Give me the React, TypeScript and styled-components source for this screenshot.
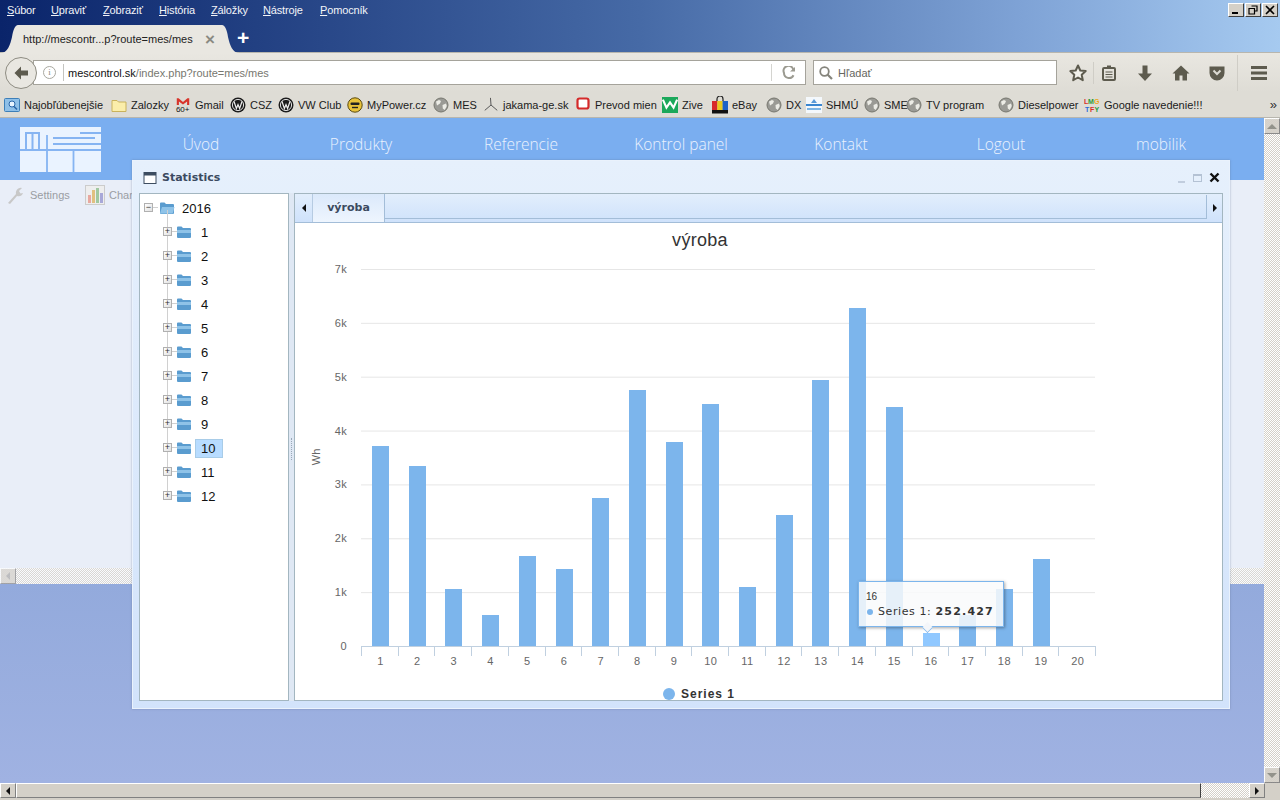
import React from 'react';
import styled, { createGlobalStyle } from 'styled-components';

const menuItems = [
  { first: 'S', rest: 'úbor', width: 44 },
  { first: 'U', rest: 'praviť', width: 52 },
  { first: 'Z', rest: 'obraziť', width: 56 },
  { first: 'H', rest: 'istória', width: 52 },
  { first: 'Z', rest: 'áložky', width: 52 },
  { first: 'N', rest: 'ástroje', width: 57 },
  { first: 'P', rest: 'omocník', width: 60 },
];

const bookmarks = [
  { label: 'Najobľúbenejšie', icon: 'star', width: 107 },
  { label: 'Zalozky', icon: 'folder', width: 64 },
  { label: 'Gmail', icon: 'gmail', width: 55 },
  { label: 'CSZ', icon: 'vw', width: 48 },
  { label: 'VW Club', icon: 'vw', width: 69 },
  { label: 'MyPower.cz', icon: 'smile', width: 86 },
  { label: 'MES', icon: 'globe', width: 50 },
  { label: 'jakama-ge.sk', icon: 'turbine', width: 92 },
  { label: 'Prevod mien', icon: 'prevod', width: 87 },
  { label: 'Zive', icon: 'zive', width: 50 },
  { label: 'eBay', icon: 'bag', width: 54 },
  { label: 'DX', icon: 'globe', width: 40 },
  { label: 'SHMÚ', icon: 'shmu', width: 58 },
  { label: 'SME', icon: 'globe', width: 42 },
  { label: 'TV program', icon: 'globe', width: 92 },
  { label: 'Dieselpower', icon: 'globe', width: 86 },
  { label: 'Google navedenie!!!', icon: 'lmgtfy', width: 180 },
];

const navItems = ['Úvod', 'Produkty', 'Referencie', 'Kontrol panel', 'Kontakt', 'Logout', 'mobilik'];
const months = ['1', '2', '3', '4', '5', '6', '7', '8', '9', '10', '11', '12'];

const barTops = [446, 466, 589, 615, 556, 569, 498, 390, 442, 404, 587, 515, 380, 308, 407, 633, 615, 589, 559];
const yTicks = ['0', '1k', '2k', '3k', '4k', '5k', '6k', '7k'];

const BASE_Y = 646;
const STEP_Y = 53.86;
const LEFT_X = 361;
const STEP_X = 36.7;

function BookmarkIcon({ kind }: { kind: string }) {
  switch (kind) {
    case 'star':
      return (
        <svg width="16" height="16" viewBox="0 0 16 16">
          <rect x="0.5" y="1.5" width="15" height="13" rx="1" fill="#8fc0e8" stroke="#3d7fb8" />
          <circle cx="8" cy="7" r="3" fill="#e8f4ff" stroke="#2a66a8" />
          <path d="M10 9.5l3 3" stroke="#2a66a8" strokeWidth="1.6" />
        </svg>
      );
    case 'folder':
      return (
        <svg width="16" height="16" viewBox="0 0 16 16">
          <path d="M1 3.5h5l1.5 1.5H15v9.5H1z" fill="#fbeeaa" stroke="#c9b25c" />
        </svg>
      );
    case 'gmail':
      return (
        <svg width="18" height="18" viewBox="0 0 18 18">
          <path d="M2 9V1.5h2L9 5.5l5-4h2V9h-2.4V5L9 8.5 4.4 5v4z" fill="#d8342a" />
          <text x="1" y="17" fontSize="9" fontFamily="Liberation Sans" fill="#111">60+</text>
        </svg>
      );
    case 'vw':
      return (
        <svg width="16" height="16" viewBox="0 0 16 16">
          <circle cx="8" cy="8" r="7.5" fill="#1c1c1c" />
          <circle cx="8" cy="8" r="5.6" fill="none" stroke="#ddd" />
          <path d="M4 4.5l2.4 7L8 7.5l1.6 4 2.4-7" fill="none" stroke="#eee" strokeWidth="1.2" />
        </svg>
      );
    case 'smile':
      return (
        <svg width="16" height="16" viewBox="0 0 16 16">
          <circle cx="8" cy="8" r="7.2" fill="#e8c23a" stroke="#5a4a10" />
          <rect x="3.5" y="5.5" width="9" height="2.5" rx="1" fill="#222" />
          <path d="M5 10.5h6" stroke="#222" strokeWidth="1.4" />
        </svg>
      );
    case 'globe':
      return (
        <svg width="16" height="16" viewBox="0 0 16 16">
          <circle cx="8" cy="8" r="7" fill="#9a9a95" stroke="#77776f" />
          <path d="M3 4.5l3-1.5 2 1-1 2.5-3 2zM9.5 8l3.5-1.5.8 2.5-2 4-2-1.5z" fill="#ecece6" />
        </svg>
      );
    case 'turbine':
      return (
        <svg width="18" height="18" viewBox="0 0 18 18">
          <path d="M9 9L8.4 1M9 9l7 6M9 9l-7 6" fill="none" stroke="#555" strokeWidth="1.1" />
        </svg>
      );
    case 'prevod':
      return (
        <svg width="16" height="16" viewBox="0 0 16 16">
          <rect x="2.5" y="1.5" width="11" height="10" rx="2" fill="#fff" stroke="#d42a2a" strokeWidth="2.2" />
        </svg>
      );
    case 'zive':
      return (
        <svg width="18" height="18" viewBox="0 0 18 18">
          <rect width="18" height="18" fill="#1ba85a" />
          <path d="M1 3l4 9 4-6 4 6 4-9" fill="none" stroke="#fff" strokeWidth="2.4" />
        </svg>
      );
    case 'bag':
      return (
        <svg width="16" height="18" viewBox="0 0 16 18">
          <path d="M5 5V3a3 3 0 016 0v2" fill="none" stroke="#222" strokeWidth="1.2" />
          <rect y="5" width="5.5" height="9" fill="#d8282a" />
          <rect x="5.3" y="5" width="5.5" height="9" fill="#e9c81f" />
          <rect x="10.6" y="5" width="5.4" height="9" fill="#1c62c8" />
          <rect y="14" width="16" height="3.5" fill="#111" />
        </svg>
      );
    case 'shmu':
      return (
        <svg width="16" height="16" viewBox="0 0 16 16">
          <rect width="16" height="16" fill="#f4f8fc" />
          <path d="M5 6l3-4 3 4z" fill="#5a9ad8" />
          <rect y="7" width="16" height="2" fill="#3a86d0" />
          <rect x="1" y="11" width="14" height="2" fill="#7cb4e4" />
        </svg>
      );
    default:
      return (
        <svg width="16" height="16" viewBox="0 0 16 16" fontFamily="Liberation Sans" fontSize="7" fontWeight="700">
          <text x="0" y="7" fill="#d8302a">L</text>
          <text x="4" y="7" fill="#2a9a3a">M</text>
          <text x="10" y="7" fill="#e8a81a">G</text>
          <text x="1" y="15" fill="#2a6ad8">T</text>
          <text x="6" y="15" fill="#d8302a">F</text>
          <text x="10.5" y="15" fill="#2a9a3a">Y</text>
        </svg>
      );
  }
}

function ToolIcon({ kind }: { kind: string }) {
  const color = '#5d5b4e';
  if (kind === 'star')
    return (
      <svg width="20" height="20" viewBox="0 0 20 20">
        <path d="M10 2.5l2.3 5 5.4.6-4 3.7 1.1 5.4L10 14.5l-4.8 2.7 1.1-5.4-4-3.7 5.4-.6z" fill="#f1f0ea" stroke={color} strokeWidth="2" strokeLinejoin="round" />
      </svg>
    );
  if (kind === 'list')
    return (
      <svg width="20" height="20" viewBox="0 0 20 20">
        <rect x="4" y="5" width="12" height="12" rx="1" fill="none" stroke={color} strokeWidth="2" />
        <rect x="8" y="2.5" width="4" height="3" fill={color} />
        <path d="M6.5 9h7M6.5 11.5h7M6.5 14h7" stroke={color} />
      </svg>
    );
  if (kind === 'down')
    return (
      <svg width="20" height="20" viewBox="0 0 20 20">
        <path d="M7.5 2.5h5v8H17l-7 7.5-7-7.5h4.5z" fill={color} />
      </svg>
    );
  if (kind === 'home')
    return (
      <svg width="20" height="20" viewBox="0 0 20 20">
        <path d="M10 2.5L1.5 10.5H4v7h4.5v-5h3v5H16v-7h2.5z" fill={color} />
      </svg>
    );
  if (kind === 'pocket')
    return (
      <svg width="20" height="20" viewBox="0 0 20 20">
        <path d="M2.5 3.5h15v6.5a7.5 7.5 0 01-15 0z" fill={color} />
        <path d="M6.5 7.5L10 11l3.5-3.5" fill="none" stroke="#dbd9d2" strokeWidth="2" />
      </svg>
    );
  return (
    <svg width="20" height="20" viewBox="0 0 20 20">
      <path d="M2 4.5h16M2 10h16M2 15.5h16" stroke={color} strokeWidth="3" />
    </svg>
  );
}

function FolderIcon({ open }: { open?: boolean }) {
  return (
    <svg width="16" height="14" viewBox="0 0 16 14">
      <path d="M1 2.5a1 1 0 011-1h3.5L7 3h7a1 1 0 011 1v8a1 1 0 01-1 1H2a1 1 0 01-1-1z" fill="#5a9ccf" />
      {open ? (
        <path d="M3 6h12.5l-1.8 6.5H1z" fill="#8fc3e8" />
      ) : (
        <path d="M1 5h14v3H1z" fill="#8fc3e8" />
      )}
    </svg>
  );
}

function MesLogo() {
  return (
    <svg width="81" height="45" viewBox="0 0 81 45">
      <rect width="81" height="45" fill="#eaf3ff" />
      <path d="M0 23h81M27 8v37M53.5 23v22" stroke="#86b4f2" strokeWidth="1.8" />
      <path d="M6 23V6h13v17M12.5 6v17" fill="none" stroke="#86b4f2" strokeWidth="2" />
      <path d="M33 11h42M33 17h48M60 6h21" stroke="#86b4f2" strokeWidth="1.8" />
    </svg>
  );
}

function Chart() {
  return (
    <ChartSvg viewBox="295 223 927 477">
      <text x="700" y="246" textAnchor="middle" fontSize="18" letterSpacing="0.3" fill="#333">výroba</text>
      {yTicks.map((tick, i) => {
        const y = BASE_Y - i * STEP_Y;
        return (
          <g key={tick}>
            {i > 0 && <line x1={LEFT_X} x2={1095} y1={y + 0.5} y2={y + 0.5} stroke="#e6e6e6" />}
            <text x="347" y={y + 4} textAnchor="end" fontSize="11" letterSpacing="0.3" fill="#666">{tick}</text>
          </g>
        );
      })}
      <text transform="translate(320 457) rotate(-90)" textAnchor="middle" fontSize="11" fill="#666">Wh</text>
      {barTops.map((top, i) => (
        <rect
          key={i}
          x={Math.round(LEFT_X + i * STEP_X + 11)}
          y={top}
          width="17"
          height={BASE_Y - top}
          fill={i === 15 ? '#90c8ff' : '#7cb5ec'}
        />
      ))}
      <line x1={LEFT_X} x2={1096} y1="646.5" y2="646.5" stroke="#c0d0e0" />
      {Array.from({ length: 21 }, (_, i) => (
        <line
          key={i}
          x1={Math.round(LEFT_X + i * STEP_X) + 0.5}
          x2={Math.round(LEFT_X + i * STEP_X) + 0.5}
          y1="646"
          y2="656"
          stroke="#c0d0e0"
        />
      ))}
      {Array.from({ length: 20 }, (_, i) => (
        <text key={i} x={LEFT_X + i * STEP_X + 19.5} y="665" textAnchor="middle" fontSize="11" letterSpacing="0.5" fill="#666">
          {i + 1}
        </text>
      ))}
      <circle cx="669" cy="694" r="6" fill="#7cb5ec" />
      <text x="681" y="698" fontSize="12" fontWeight="700" letterSpacing="1" fill="#333">Series 1</text>
    </ChartSvg>
  );
}

export default function App() {
  return (
    <Browser>
      <GlobalStyle />
      <TitleBar>
        <MenuRow>
          {menuItems.map((item, i) => (
            <MenuItem key={i} $width={item.width}>
              <u>{item.first}</u>
              {item.rest}
            </MenuItem>
          ))}
          <WinButtons>
            <WinButton><span className="min" /></WinButton>
            <WinButton>
              <svg width="10" height="10" viewBox="0 0 10 10">
                <path d="M3.5 1H9v5H7M1 3.5h5.500V9H1z" fill="none" stroke="#000" strokeWidth="1.2" />
              </svg>
            </WinButton>
            <WinButton>
              <svg width="10" height="10" viewBox="0 0 10 10">
                <path d="M1 1l8 8M9 1l-8 8" stroke="#000" strokeWidth="1.6" />
              </svg>
            </WinButton>
          </WinButtons>
        </MenuRow>
        <TabRow>
          <BrowserTab>
            <span>http://mescontr...p?route=mes/mes</span>
            <TabClose>×</TabClose>
          </BrowserTab>
          <NewTab>+</NewTab>
        </TabRow>
      </TitleBar>

      <Toolbar>
        <BackButton>
          <svg width="18" height="18" viewBox="0 0 18 18">
            <path d="M9 2.5L2.5 9 9 15.5v-4h7v-5H9z" fill="#5d5b4e" />
          </svg>
        </BackButton>
        <UrlBar>
          <InfoIcon>i</InfoIcon>
          <UrlDivider />
          <UrlText>
            mescontrol.sk<span>/index.php?route=mes/mes</span>
          </UrlText>
          <ReloadCell>
            <svg width="14" height="14" viewBox="0 0 14 14">
              <path d="M11.5 5A5 5 0 102 7a5 5 0 009.5 2.2" fill="none" stroke="#9b9a90" strokeWidth="2" />
              <path d="M8 5.5h5V1z" fill="#9b9a90" />
            </svg>
          </ReloadCell>
        </UrlBar>
        <SearchBar>
          <svg width="16" height="16" viewBox="0 0 16 16">
            <circle cx="6.5" cy="6.5" r="4.3" fill="none" stroke="#85847c" strokeWidth="1.8" />
            <path d="M9.5 9.5L14 14" stroke="#85847c" strokeWidth="2.2" />
          </svg>
          <span>Hľadať</span>
        </SearchBar>
        <ToolButton $margin={11}><ToolIcon kind="star" /></ToolButton>
        <ToolSeparator />
        <ToolButton $margin={0}><ToolIcon kind="list" /></ToolButton>
        <ToolButton $margin={16}><ToolIcon kind="down" /></ToolButton>
        <ToolButton $margin={16}><ToolIcon kind="home" /></ToolButton>
        <ToolButton $margin={16}><ToolIcon kind="pocket" /></ToolButton>
        <MenuSeparator />
        <ToolButton $margin={11}><ToolIcon kind="menu" /></ToolButton>
      </Toolbar>

      <BookmarkBar>
        {bookmarks.map((item) => (
          <Bookmark key={item.label} $width={item.width}>
            <BookmarkGlyph><BookmarkIcon kind={item.icon} /></BookmarkGlyph>
            <span>{item.label}</span>
          </Bookmark>
        ))}
        <Overflow>»</Overflow>
      </BookmarkBar>

      <ViewportRow>
        <Page>
          <PageHeader>
            <LogoCell><MesLogo /></LogoCell>
            {navItems.map((item) => (
              <NavLink key={item}>{item}</NavLink>
            ))}
          </PageHeader>
          <SubNav>
            <SubNavItem $width={79}>
              <svg width="20" height="20" viewBox="0 0 20 20">
                <path d="M2 18l8-9a5 5 0 016-6l-3 3 1.5 2.5L17 8a5 5 0 01-6 3l-7 8z" fill="#c8c8c8" />
              </svg>
              Settings
            </SubNavItem>
            <SubNavItem $width={80}>
              <svg width="20" height="20" viewBox="0 0 20 20">
                <rect x="0.5" y="0.5" width="19" height="19" fill="#eee" stroke="#ccc" />
                <rect x="3" y="10" width="3" height="8" fill="#e8a8a0" />
                <rect x="7" y="5" width="3" height="13" fill="#e0c080" />
                <rect x="11" y="3" width="3" height="15" fill="#a0c8a0" />
                <rect x="15" y="8" width="3" height="10" fill="#a8a8d8" />
              </svg>
              Charts
            </SubNavItem>
          </SubNav>
          <PageFill />
          <InnerScrollbar>
            <ScrollButton $faded>
              <Arrow $dir="left" $color="#a8a8a8" />
            </ScrollButton>
          </InnerScrollbar>
          <PageBottom />

          <Window>
            <WindowHeader>
              <svg width="14" height="14" viewBox="0 0 14 14">
                <rect x="1" y="1.5" width="12" height="11" fill="#fff" stroke="#3d4d60" />
                <rect x="1" y="1.5" width="12" height="3" fill="#3d4d60" />
              </svg>
              <WindowTitle>Statistics</WindowTitle>
              <WindowTools>
                <svg width="10" height="10" viewBox="0 0 10 10"><path d="M1 9h7" stroke="#b4c2d4" strokeWidth="1.5" /></svg>
                <svg width="10" height="10" viewBox="0 0 10 10"><rect x="0.5" y="1.5" width="8" height="7" fill="none" stroke="#b4c2d4" /><path d="M0 2h9" stroke="#b4c2d4" strokeWidth="2" /></svg>
                <svg width="11" height="11" viewBox="0 0 11 11"><path d="M1.5 1.5l8 8M9.5 1.5l-8 8" stroke="#111" strokeWidth="2.4" /></svg>
              </WindowTools>
            </WindowHeader>
            <WindowBody>
              <TreePanel>
                <TreeRow>
                  <Expander $offset={4}>−</Expander>
                  <FolderIcon open />
                  <RootLabel>2016</RootLabel>
                </TreeRow>
                <TreeBranch>
                  {months.map((month) => (
                    <TreeRow key={month} $child>
                      <Expander>+</Expander>
                      <FolderIcon />
                      <NodeLabel $selected={month === '10'}>{month}</NodeLabel>
                    </TreeRow>
                  ))}
                </TreeBranch>
              </TreePanel>
              <Splitter />
              <TabPanel>
                <TabStrip>
                  <Scroller $width={17}><Arrow $dir="left" $color="#111" /></Scroller>
                  <ActiveTab>výroba</ActiveTab>
                  <TabStripFill />
                  <Scroller $width={15}><Arrow $dir="right" $color="#111" /></Scroller>
                </TabStrip>
                <ChartArea>
                  <Chart />
                  <Tooltip>
                    <TooltipHead>16</TooltipHead>
                    <TooltipLine>
                      <TooltipDot />
                      Series 1:<b>252.427</b>
                    </TooltipLine>
                  </Tooltip>
                </ChartArea>
              </TabPanel>
            </WindowBody>
          </Window>
        </Page>
        <VerticalScrollbar>
          <ScrollButton $faded><Arrow $dir="up" $color="#8a8a82" /></ScrollButton>
          <ScrollButton $faded><Arrow $dir="down" $color="#8a8a82" /></ScrollButton>
        </VerticalScrollbar>
      </ViewportRow>

      <BottomScrollbar>
        <BottomButton><Arrow $dir="left" $color="#111" /></BottomButton>
        <BottomThumb />
        <BottomTrack />
        <BottomButton><Arrow $dir="right" $color="#111" /></BottomButton>
      </BottomScrollbar>
    </Browser>
  );
}

const GlobalStyle = createGlobalStyle`
  html, body {
    margin: 0;
    padding: 0;
    overflow: hidden;
  }
  body {
    font-family: "Liberation Sans", Arial, sans-serif;
  }
`;

const checker = `repeating-conic-gradient(#d4d0c8 0 25%, #ffffff 0 50%) 0 0 / 2px 2px`;

const Browser = styled.div`
  width: 1280px;
  height: 800px;
  display: flex;
  flex-direction: column;
  overflow: hidden;
  background: #d4d0c8;
`;

const TitleBar = styled.div`
  height: 53px;
  flex: none;
  box-sizing: border-box;
  border-bottom: 1px solid #b8b6ae;
  background: linear-gradient(90deg, #0a246a 0%, #466aa6 50%, #7fa3d6 80%, #a6caf0 100%);
  display: flex;
  flex-direction: column;
`;

const MenuRow = styled.div`
  height: 20px;
  padding-left: 7px;
  display: flex;
  align-items: center;
`;

const MenuItem = styled.div<{ $width: number }>`
  width: ${(p) => p.$width}px;
  flex: none;
  color: #f2f4f8;
  font-size: 11px;
  letter-spacing: -0.15px;
`;

const WinButtons = styled.div`
  margin-left: auto;
  margin-right: 2px;
  display: flex;
`;

const WinButton = styled.div`
  width: 16px;
  height: 14px;
  margin-left: 1px;
  background: #d4d0c8;
  border: 1px solid;
  border-color: #fff #404040 #404040 #fff;
  box-sizing: border-box;
  display: flex;
  align-items: center;
  justify-content: center;

  .min {
    width: 6px;
    height: 2px;
    background: #000;
    margin-top: 6px;
    margin-right: 2px;
  }
`;

const TabRow = styled.div`
  flex: 1;
  display: flex;
  align-items: flex-end;
  padding-left: 18px;
`;

const BrowserTab = styled.div`
  position: relative;
  width: 204px;
  height: 28px;
  margin-bottom: -1px;
  padding-left: 5px;
  box-sizing: border-box;
  background: #e9e7e1;
  display: flex;
  align-items: center;
  justify-content: space-between;
  font-size: 11px;
  color: #222;
  white-space: nowrap;

  &::before,
  &::after {
    content: '';
    position: absolute;
    bottom: 0;
    width: 18px;
    height: 28px;
    background: #e9e7e1;
  }
  &::before {
    left: -18px;
    clip-path: path('M0 28 C8 28 10 20 12 12 C13 5 15 0 18 0 L18 28 Z');
  }
  &::after {
    right: -18px;
    clip-path: path('M18 28 C10 28 8 20 6 12 C5 5 3 0 0 0 L0 28 Z');
  }
`;

const TabClose = styled.span`
  margin-right: 7px;
  color: #8a8a82;
  font-size: 17px;
  font-weight: 700;
  line-height: 1;
`;

const NewTab = styled.div`
  position: relative;
  margin-left: 15px;
  margin-bottom: 3px;
  color: #fff;
  font-size: 21px;
  font-weight: 700;
  line-height: 22px;
`;

const Toolbar = styled.div`
  height: 39px;
  flex: none;
  background: linear-gradient(180deg, #e9e7e1 0%, #dedcd5 100%);
  box-sizing: border-box;
  display: flex;
  align-items: center;
  padding-left: 5px;
`;

const BackButton = styled.div`
  position: relative;
  z-index: 1;
  width: 32px;
  height: 32px;
  box-sizing: border-box;
  border: 1px solid #8e8c82;
  border-radius: 50%;
  background: #e9e7e1;
  display: flex;
  align-items: center;
  justify-content: center;
  flex: none;
`;

const UrlBar = styled.div`
  margin-left: -4px;
  width: 773px;
  height: 25px;
  flex: none;
  box-sizing: border-box;
  background: #fff;
  border: 1px solid #a5a39b;
  display: flex;
  align-items: center;
  padding-left: 9px;
`;

const InfoIcon = styled.div`
  width: 11px;
  height: 11px;
  border: 1px solid #a8a8a0;
  border-radius: 50%;
  color: #8a8a82;
  font-size: 9px;
  line-height: 11px;
  text-align: center;
  font-family: "Liberation Serif", serif;
`;

const UrlDivider = styled.div`
  width: 1px;
  height: 17px;
  margin: 0 4px 0 7px;
  background: #c4c4c0;
`;

const UrlText = styled.div`
  flex: 1;
  font-size: 11px;
  color: #111;

  span {
    color: #77776f;
  }
`;

const ReloadCell = styled.div`
  width: 33px;
  height: 17px;
  border-left: 1px solid #d4d4d0;
  display: flex;
  align-items: center;
  justify-content: center;
`;

const SearchBar = styled.div`
  margin-left: 7px;
  width: 244px;
  height: 25px;
  flex: none;
  box-sizing: border-box;
  background: #fff;
  border: 1px solid #a5a39b;
  display: flex;
  align-items: center;
  gap: 4px;
  padding-left: 4px;
  font-size: 11px;
  color: #66665e;
`;

const ToolButton = styled.div<{ $margin: number }>`
  margin-left: ${(p) => p.$margin}px;
  width: 20px;
  height: 20px;
  flex: none;
`;

const ToolSeparator = styled.div`
  width: 1px;
  height: 22px;
  margin: 0 5px;
  background: #cfcdc6;
`;

const MenuSeparator = styled.div`
  width: 1px;
  height: 36px;
  margin-left: 10px;
  background: #cfcdc6;
`;

const BookmarkBar = styled.div`
  height: 26px;
  flex: none;
  background: #dedcd5;
  border-bottom: 1px solid #b8b6ae;
  box-sizing: border-box;
  display: flex;
  align-items: center;
  padding-left: 4px;
`;

const Bookmark = styled.div<{ $width: number }>`
  width: ${(p) => p.$width}px;
  flex: none;
  display: flex;
  align-items: center;
  gap: 4px;
  font-size: 11px;
  color: #1b1b1b;
  white-space: nowrap;
`;

const BookmarkGlyph = styled.div`
  width: 16px;
  height: 18px;
  display: flex;
  align-items: center;
  justify-content: center;
`;

const Overflow = styled.div`
  margin-left: auto;
  margin-right: 3px;
  font-size: 13px;
  color: #333;
`;

const ViewportRow = styled.div`
  height: 665px;
  flex: none;
  display: flex;
`;

const Page = styled.div`
  position: relative;
  width: 1264px;
  flex: none;
  display: flex;
  flex-direction: column;
  background: #e9eef8;
`;

const PageHeader = styled.div`
  height: 62px;
  flex: none;
  background: #7aaef0;
  display: flex;
`;

const LogoCell = styled.div`
  width: 121px;
  flex: none;
  padding: 9px 0 0 20px;
  box-sizing: border-box;
`;

const NavLink = styled.div`
  width: 160px;
  flex: none;
  text-align: center;
  padding-top: 15px;
  color: #eaf2fe;
  font-family: "Open Sans", sans-serif;
  font-weight: 300;
  font-size: 15.5px;
`;

const SubNav = styled.div`
  height: 30px;
  flex: none;
  display: flex;
  align-items: center;
  padding-left: 6px;
`;

const SubNavItem = styled.div<{ $width: number }>`
  width: ${(p) => p.$width}px;
  flex: none;
  display: flex;
  align-items: center;
  gap: 4px;
  font-size: 11px;
  color: #9a9da3;
`;

const PageFill = styled.div`
  flex: 1;
`;

const InnerScrollbar = styled.div`
  height: 16px;
  flex: none;
  background: ${checker};
  opacity: 0.75;
`;

const ScrollButton = styled.div<{ $faded?: boolean }>`
  width: 16px;
  height: 16px;
  flex: none;
  box-sizing: border-box;
  background: #d4d0c8;
  border: 1px solid;
  border-color: #fff #808080 #808080 #fff;
  opacity: ${(p) => (p.$faded ? 0.9 : 1)};
  display: flex;
  align-items: center;
  justify-content: center;
`;

const BottomButton = styled(ScrollButton)`
  height: 15px;
`;

const Arrow = styled.span<{ $dir: 'left' | 'right' | 'up' | 'down'; $color: string }>`
  width: 0;
  height: 0;
  border-style: solid;
  border-color: transparent;
  ${(p) => (p.$dir === 'left' ? `border-width: 4px 4px 4px 0; border-right-color: ${p.$color};` : '')}
  ${(p) => (p.$dir === 'right' ? `border-width: 4px 0 4px 4px; border-left-color: ${p.$color};` : '')}
  ${(p) => (p.$dir === 'up' ? `border-width: 0 5px 5px 5px; border-bottom-color: ${p.$color};` : '')}
  ${(p) => (p.$dir === 'down' ? `border-width: 5px 5px 0 5px; border-top-color: ${p.$color};` : '')}
`;

const PageBottom = styled.div`
  height: 199px;
  flex: none;
  background: linear-gradient(180deg, #93aadc 0%, #a0b2e2 100%);
`;

const VerticalScrollbar = styled.div`
  width: 16px;
  flex: none;
  background: ${checker};
  display: flex;
  flex-direction: column;
  justify-content: space-between;
`;

const BottomScrollbar = styled.div`
  height: 17px;
  flex: none;
  display: flex;
  background: #d4d0c8;
`;

const BottomThumb = styled.div`
  width: 1185px;
  flex: none;
  height: 15px;
  box-sizing: border-box;
  background: #d4d0c8;
  border-top: 1px solid #fff;
  border-left: 1px solid #fff;
  border-right: 1px solid #404040;
  border-bottom: 1px solid #808080;
`;

const BottomTrack = styled.div`
  width: 48px;
  height: 15px;
  flex: none;
  background: ${checker};
`;

const Window = styled.div`
  position: absolute;
  left: 132px;
  top: 42px;
  width: 1098px;
  height: 549px;
  box-sizing: border-box;
  display: flex;
  flex-direction: column;
  padding: 0 6px 7px;
  background: linear-gradient(180deg, #e6f0fc 0%, #d2e3fb 100%);
  border: 1px solid #eaf2fc;
  box-shadow: 0 0 2px rgba(90, 110, 140, 0.5);
`;

const WindowHeader = styled.div`
  height: 32px;
  flex: none;
  box-sizing: border-box;
  display: flex;
  align-items: center;
  gap: 5px;
  padding: 1px 0 0 4px;
`;

const WindowTitle = styled.div`
  font-family: "DejaVu Sans", sans-serif;
  font-size: 11px;
  font-weight: 700;
  color: #3b4a60;
`;

const WindowTools = styled.div`
  margin-left: auto;
  margin-right: 3px;
  display: flex;
  align-items: center;
  gap: 6px;
`;

const WindowBody = styled.div`
  flex: 1;
  display: flex;
  min-height: 0;
`;

const TreePanel = styled.div`
  width: 150px;
  flex: none;
  box-sizing: border-box;
  background: #fff;
  border: 1px solid #a3b6c0;
  padding-top: 2px;
`;

const TreeBranch = styled.div`
  position: relative;

  &::before {
    content: '';
    position: absolute;
    left: 27px;
    top: -10px;
    bottom: 12px;
    border-left: 1px solid #d0d0d0;
  }
`;

const TreeRow = styled.div<{ $child?: boolean }>`
  position: relative;
  height: 24px;
  display: flex;
  align-items: center;
  padding-left: ${(p) => (p.$child ? 36 : 19)}px;
`;

const Expander = styled.div<{ $offset?: number }>`
  position: absolute;
  z-index: 1;
  left: ${(p) => p.$offset ?? 23}px;
  top: 7px;
  width: 9px;
  height: 9px;
  box-sizing: border-box;
  border: 1px solid #b0b0b0;
  background: linear-gradient(135deg, #fff, #e0e0e0);
  font-size: 9px;
  line-height: 7px;
  text-align: center;
  color: #333;

  &::after {
    content: '';
    position: absolute;
    left: 8px;
    top: 3px;
    width: 5px;
    border-top: 1px solid #d0d0d0;
  }
`;

const RootLabel = styled.span`
  margin-left: 7px;
  font-size: 13px;
  color: #111;
`;

const NodeLabel = styled.span<{ $selected?: boolean }>`
  margin-left: 4px;
  padding: 1px 5px;
  min-width: 16px;
  font-size: 13px;
  line-height: 15px;
  color: #111;
  background: ${(p) => (p.$selected ? '#b8dcff' : 'transparent')};
  outline: ${(p) => (p.$selected ? '1px solid #a8cce8' : 'none')};
`;

const Splitter = styled.div`
  width: 5px;
  flex: none;
  position: relative;
  background: #dfe8f4;

  &::after {
    content: '';
    position: absolute;
    left: 2px;
    top: 245px;
    height: 22px;
    border-left: 1px dotted #9aa8b8;
  }
`;

const TabPanel = styled.div`
  flex: 1;
  min-width: 0;
  display: flex;
  flex-direction: column;
  box-sizing: border-box;
  border: 1px solid #a3b6c0;
  background: #fff;
`;

const TabStrip = styled.div`
  height: 29px;
  flex: none;
  display: flex;
  background: linear-gradient(180deg, #e2eefc 0%, #cfe2fb 100%);
  border-bottom: 1px solid #a3bdd8;
  box-sizing: border-box;
`;

const Scroller = styled.div<{ $width: number }>`
  width: ${(p) => p.$width}px;
  flex: none;
  display: flex;
  align-items: center;
  justify-content: center;
`;

const ActiveTab = styled.div`
  width: 73px;
  height: 28px;
  flex: none;
  box-sizing: border-box;
  text-align: center;
  padding-top: 7px;
  font-family: "DejaVu Sans", sans-serif;
  font-size: 11px;
  font-weight: 700;
  color: #3b4a60;
  background: linear-gradient(180deg, #dbe9fb 0%, #eef5fe 100%);
  border-left: 1px solid #b6cbe2;
  border-right: 1px solid #a3bdd8;
`;

const TabStripFill = styled.div`
  flex: 1;
  height: 23px;
  margin-top: 1px;
  border-bottom: 1px solid #a3bdd8;
  border-right: 1px solid #a3bdd8;
`;

const ChartArea = styled.div`
  position: relative;
  flex: 1;
  min-height: 0;
  overflow: hidden;
`;

const ChartSvg = styled.svg`
  display: block;
  width: 927px;
  height: 477px;
  font-family: "Liberation Sans", sans-serif;
`;

const Tooltip = styled.div`
  position: absolute;
  left: 563px;
  top: 358px;
  width: 146px;
  height: 46px;
  box-sizing: border-box;
  padding: 9px 0 0 7px;
  background: rgba(249, 250, 252, 0.85);
  border: 1px solid #7cb5ec;
  box-shadow: 1px 1px 3px rgba(0, 0, 0, 0.35);
  color: #333;

  &::after {
    content: '';
    position: absolute;
    left: 63px;
    bottom: -7px;
    width: 10px;
    height: 10px;
    background: #f4f6fa;
    border-right: 1px solid #7cb5ec;
    border-bottom: 1px solid #7cb5ec;
    transform: rotate(45deg) scale(0.7);
  }
`;

const TooltipHead = styled.div`
  font-size: 10px;
  line-height: 12px;
`;

const TooltipLine = styled.div`
  margin-top: 2px;
  display: flex;
  align-items: center;
  white-space: pre;
  letter-spacing: 0.6px;
  font-family: "DejaVu Sans", sans-serif;
  font-size: 11px;

  b {
    letter-spacing: 1.2px;
    margin-left: 4px;
  }
`;

const TooltipDot = styled.span`
  width: 6px;
  height: 6px;
  border-radius: 50%;
  background: #7cb5ec;
  margin-right: 5px;
  margin-left: 1px;
`;
